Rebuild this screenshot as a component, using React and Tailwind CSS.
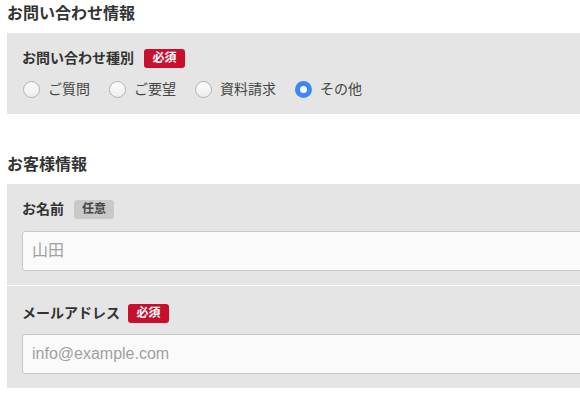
import React from 'react';

const font = "font-['Liberation_Sans','Noto_Sans_CJK_JP',sans-serif]";

const Badge = ({ required, gap = 'ml-[10px]' }) =>
    required ? (
        <span className={`${gap} inline-flex h-[19px] w-[41px] items-center justify-center rounded-[3px] bg-[#c8102e] text-[12px] font-bold leading-none text-white`}>
            必須
        </span>
    ) : (
        <span className={`${gap} inline-flex h-[19px] w-[40px] items-center justify-center rounded-[3px] bg-[#c9c9c9] text-[12px] font-bold leading-none text-[#444]`}>
            任意
        </span>
    );

const Radio = ({ label, checked }) => (
    <label className="mr-[19px] flex items-center">
        {checked ? (
            <span className="flex h-[17px] w-[17px] items-center justify-center rounded-full bg-[#3b87f7]">
                <span className="h-[7px] w-[7px] rounded-full bg-white" />
            </span>
        ) : (
            <span className="h-[17px] w-[17px] rounded-full border border-[#b3b3b3] bg-gradient-to-b from-[#ffffff] to-[#ececec] shadow-[inset_0_1px_1px_rgba(0,0,0,0.05)]" />
        )}
        <span className="ml-[8px] text-[14px] text-[#444]">{label}</span>
    </label>
);

const Field = ({ label, required, placeholder, top, gap, className }) => (
    <div className={`pl-[15px] ${className}`}>
        <div className="flex h-[24px] items-center">
            <span className="text-[14px] font-bold text-[#333]">{label}</span>
            <Badge required={required} gap={gap} />
        </div>
        <input
            placeholder={placeholder}
            className={`${top} block h-[40px] w-full rounded-[3px] border border-[#c8c8c8] bg-[#fafafa] px-[9px] text-[16px] text-[#333] placeholder:text-[#a0a0a0] outline-none`}
        />
    </div>
);

export default function App() {
    return (
        <div className={`w-[580px] h-[393px] overflow-hidden bg-white ${font}`}>
            <div className="w-[820px] pl-[7px] pt-[2px]">
                <h2 className="mb-[7px] h-[24px] text-[16px] font-bold leading-[24px] text-[#333]">お問い合わせ情報</h2>
                <div className="bg-[#e5e5e5] pl-[15px] pt-[13px] pb-[15px]">
                    <div className="flex h-[24px] items-center">
                        <span className="text-[14px] font-bold text-[#333]">お問い合わせ種別</span>
                        <Badge required />
                    </div>
                    <div className="mt-[9px] flex h-[20px] items-center pl-px">
                        <Radio label="ご質問" />
                        <Radio label="ご要望" />
                        <Radio label="資料請求" />
                        <Radio label="その他" checked />
                    </div>
                </div>

                <h2 className="mt-[39px] mb-[7px] h-[24px] text-[16px] font-bold leading-[24px] text-[#333]">お客様情報</h2>
                <div className="bg-[#e5e5e5]">
                    <Field
                        label="お名前"
                        placeholder="山田"
                        top="mt-[10px]"
                        className="pt-[13px] pb-[14px] border-b border-white"
                    />
                    <Field
                        label="メールアドレス"
                        required
                        gap="ml-[8px]"
                        placeholder="info@example.com"
                        top="mt-[9px]"
                        className="pt-[15px] pb-[14px]"
                    />
                </div>
            </div>
        </div>
    );
}
